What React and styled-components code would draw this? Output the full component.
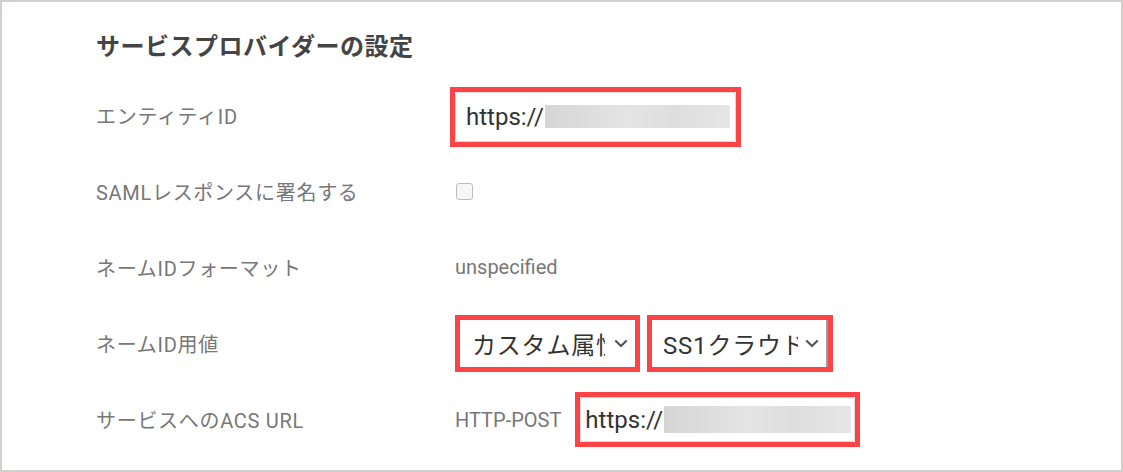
import styled, { createGlobalStyle } from 'styled-components';

const GlobalStyle = createGlobalStyle`
  html, body {
    margin: 0;
    padding: 0;
    background: #ffffff;
  }
  * {
    box-sizing: border-box;
  }
`

const Frame = styled.div`
  width: 1123px;
  height: 472px;
  border: 2px solid #d3cfcf;
  background: #ffffff;
  padding: 27px 0 0 94px;
  font-family: Roboto, "Noto Sans CJK JP", sans-serif;
  overflow: hidden;
`

const Title = styled.h2`
  margin: 0 0 12px 0;
  font-size: 24px;
  line-height: 36px;
  font-weight: 700;
  letter-spacing: 0.5px;
  color: #444444;
`

const Row = styled.div`
  display: grid;
  grid-template-columns: 359px 1fr;
  align-items: center;
  height: 76px;
`

const Label = styled.div`
  font-size: 20px;
  letter-spacing: 0.7px;
  color: #777777;
`

const Value = styled.div`
  display: flex;
  align-items: center;
  gap: ${p => p.$gap || 0}px;
  margin-top: ${p => p.$shift || 0}px;
`

const Plain = styled.span`
  font-size: 20px;
  color: #777777;
`

const Highlight = styled.div`
  border: 5px solid #fc4346;
  width: ${p => p.$w}px;
  height: ${p => p.$h}px;
  margin-left: ${p => p.$ml || 0}px;
  display: flex;
  background: #ffffff;
`

const Input = styled.div`
  flex: 1;
  display: flex;
  align-items: center;
  border: 1px solid #d9d9d9;
  border-radius: 3px;
  padding-left: ${p => p.$pad}px;
  font-size: 24px;
  color: #333333;
  overflow: hidden;
`

const Blur = styled.div`
  flex: 1;
  height: ${p => p.$h}px;
  margin-left: 1px;
  margin-right: ${p => p.$mr}px;
  background: linear-gradient(90deg, #d6d6d6 0%, #e4e4e4 45%, #dedede 70%, #e6e6e6 100%);
  filter: blur(0.6px);
`

const Select = styled.div`
  flex: 1;
  display: flex;
  align-items: center;
  padding: 0 7px 0 ${p => p.$pad}px;
  border-right: ${p => (p.$edge ? '2px solid #9a9a9a' : 'none')};
  font-size: 24px;
  color: #333333;
  letter-spacing: 0.8px;
`

const SelectText = styled.span`
  width: ${p => p.$w}px;
  white-space: nowrap;
  overflow: hidden;
`

const Chevron = styled.svg`
  margin-left: auto;
  flex-shrink: 0;
`

const Checkbox = styled.div`
  width: 17px;
  height: 17px;
  border: 1px solid #bdbdbd;
  border-radius: 3px;
  background: #f7f7f7;
  margin-left: 1px;
`

const Down = () => (
  <Chevron width="14" height="9" viewBox="0 0 14 9">
    <path d="M1.3 1.5 L7 7 L12.7 1.5" fill="none" stroke="#555555" strokeWidth="2.2" />
  </Chevron>
)

export default function App() {
  return (
    <>
      <GlobalStyle />
      <Frame>
        <Title>サービスプロバイダーの設定</Title>

        <Row>
          <Label>エンティティID</Label>
          <Value $shift={3}>
            <Highlight $w={291} $h={60} $ml={-5}>
              <Input $pad={10}>
                https://
                <Blur $h={23} $mr={5} />
              </Input>
            </Highlight>
          </Value>
        </Row>

        <Row>
          <Label>SAMLレスポンスに署名する</Label>
          <Value>
            <Checkbox />
          </Value>
        </Row>

        <Row>
          <Label>ネームIDフォーマット</Label>
          <Value>
            <Plain>unspecified</Plain>
          </Value>
        </Row>

        <Row>
          <Label>ネームID用値</Label>
          <Value $gap={7} $shift={1}>
            <Highlight $w={185} $h={57}>
              <Select $pad={12}>
                <SelectText $w={133}>カスタム属性</SelectText>
                <Down />
              </Select>
            </Highlight>
            <Highlight $w={186} $h={57}>
              <Select $pad={11} $edge>
                <SelectText $w={135}>SS1クラウド</SelectText>
                <Down />
              </Select>
            </Highlight>
          </Value>
        </Row>

        <Row>
          <Label>サービスへのACS URL</Label>
          <Value $gap={14} $shift={1}>
            <Plain>HTTP-POST</Plain>
            <Highlight $w={285} $h={55}>
              <Input $pad={4}>
                https://
                <Blur $h={27} $mr={3} />
              </Input>
            </Highlight>
          </Value>
        </Row>
      </Frame>
    </>
  );
}
